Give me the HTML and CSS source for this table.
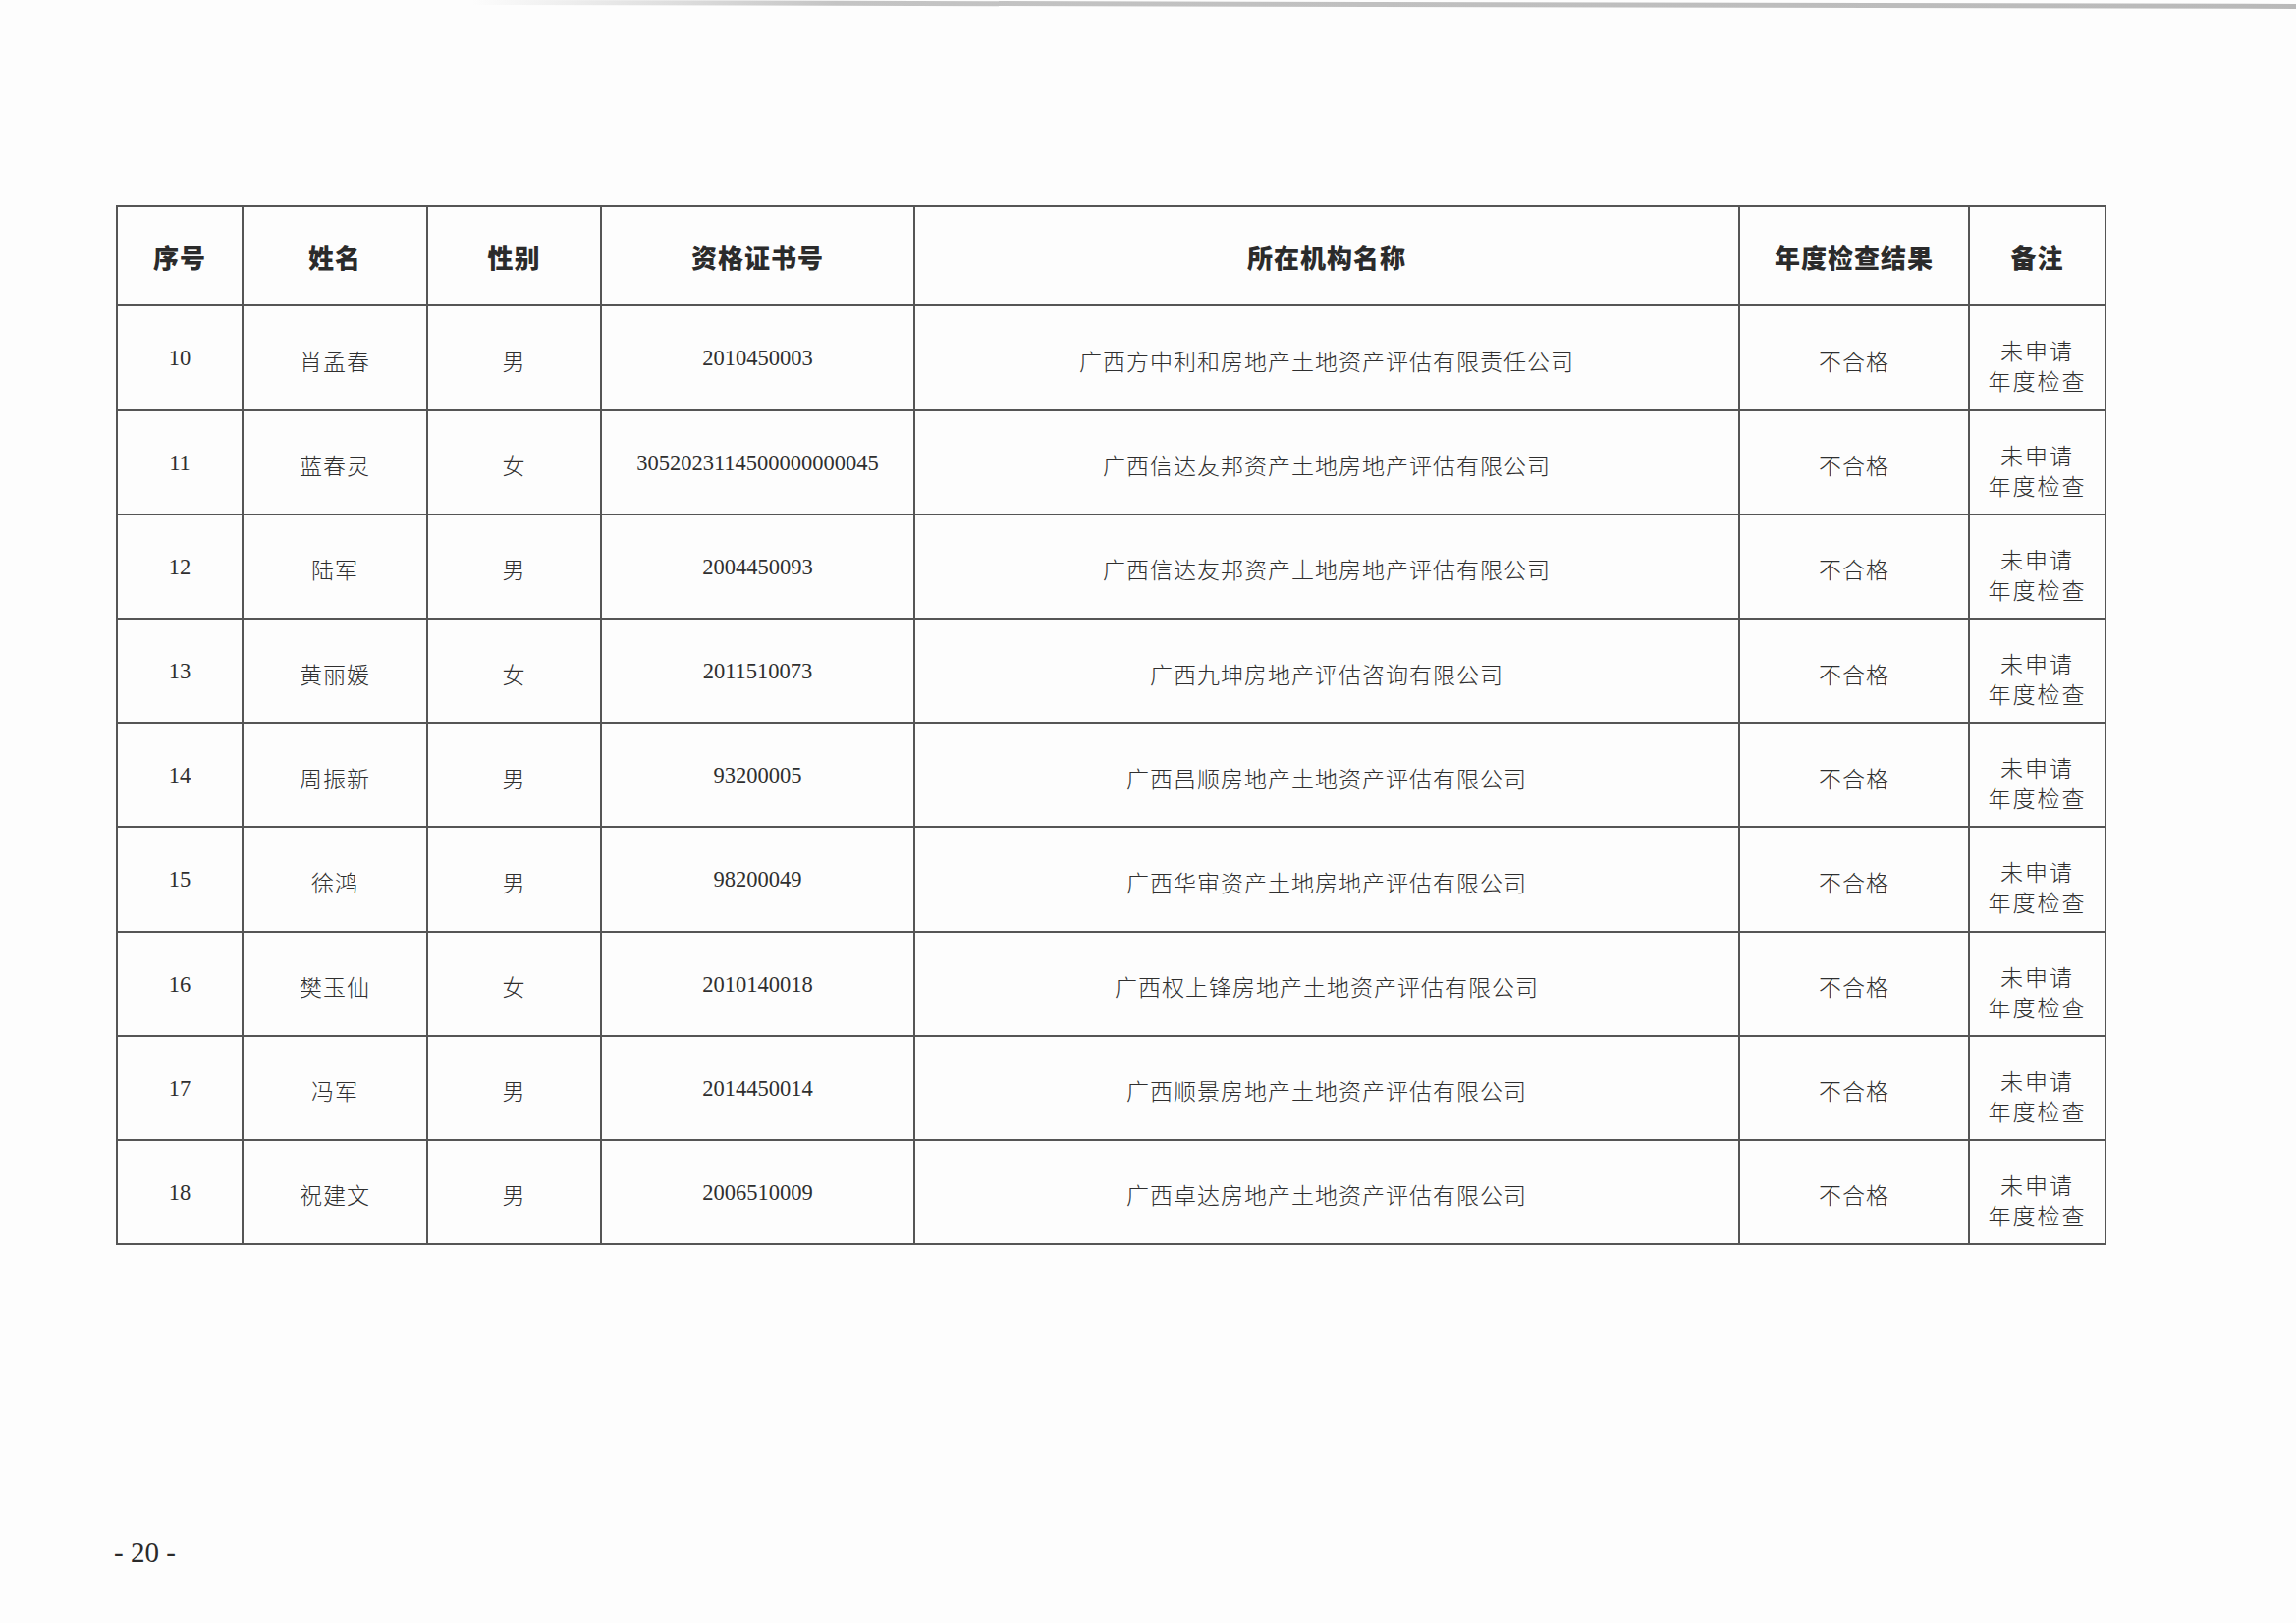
FILE: index.html
```html
<!DOCTYPE html>
<html lang="zh-CN">
<head>
<meta charset="utf-8">
<title>年度检查结果</title>
<link rel="stylesheet" href="styles.css">
</head>
<body>
<div class="page">
  <div class="scan-edge"></div>
  <table class="grid">
    <colgroup>
      <col class="c-no"><col class="c-name"><col class="c-sex"><col class="c-cert"><col class="c-org"><col class="c-res"><col class="c-note">
    </colgroup>
    <thead>
      <tr class="head-row">
        <th>序号</th><th>姓名</th><th>性别</th><th>资格证书号</th><th>所在机构名称</th><th>年度检查结果</th><th>备注</th>
      </tr>
    </thead>
    <tbody>
      <tr><td class="num">10</td><td>肖孟春</td><td>男</td><td class="num">2010450003</td><td>广西方中利和房地产土地资产评估有限责任公司</td><td>不合格</td><td class="note">未申请<br>年度检查</td></tr>
      <tr><td class="num">11</td><td>蓝春灵</td><td>女</td><td class="num">3052023114500000000045</td><td>广西信达友邦资产土地房地产评估有限公司</td><td>不合格</td><td class="note">未申请<br>年度检查</td></tr>
      <tr><td class="num">12</td><td>陆军</td><td>男</td><td class="num">2004450093</td><td>广西信达友邦资产土地房地产评估有限公司</td><td>不合格</td><td class="note">未申请<br>年度检查</td></tr>
      <tr><td class="num">13</td><td>黄丽媛</td><td>女</td><td class="num">2011510073</td><td>广西九坤房地产评估咨询有限公司</td><td>不合格</td><td class="note">未申请<br>年度检查</td></tr>
      <tr><td class="num">14</td><td>周振新</td><td>男</td><td class="num">93200005</td><td>广西昌顺房地产土地资产评估有限公司</td><td>不合格</td><td class="note">未申请<br>年度检查</td></tr>
      <tr><td class="num">15</td><td>徐鸿</td><td>男</td><td class="num">98200049</td><td>广西华审资产土地房地产评估有限公司</td><td>不合格</td><td class="note">未申请<br>年度检查</td></tr>
      <tr><td class="num">16</td><td>樊玉仙</td><td>女</td><td class="num">2010140018</td><td>广西权上锋房地产土地资产评估有限公司</td><td>不合格</td><td class="note">未申请<br>年度检查</td></tr>
      <tr><td class="num">17</td><td>冯军</td><td>男</td><td class="num">2014450014</td><td>广西顺景房地产土地资产评估有限公司</td><td>不合格</td><td class="note">未申请<br>年度检查</td></tr>
      <tr><td class="num">18</td><td>祝建文</td><td>男</td><td class="num">2006510009</td><td>广西卓达房地产土地资产评估有限公司</td><td>不合格</td><td class="note">未申请<br>年度检查</td></tr>
    </tbody>
  </table>
  <div class="page-no">- 20 -</div>
</div>
</body>
</html>
```

FILE: styles.css
```css
html, body {
  margin: 0;
  padding: 0;
  background: #fdfdfd;
}

.page {
  position: relative;
  width: 2338px;
  height: 1653px;
  box-sizing: border-box;
  padding: 209px 0 0 118px;
  overflow: hidden;
}

.scan-edge {
  position: absolute;
  top: 0;
  left: 480px;
  width: 1858px;
  height: 5px;
  background: linear-gradient(to right, rgba(190,190,190,0), #c4c4c4 20%, #b9b9b9 100%);
  transform: rotate(0.12deg);
  transform-origin: left top;
}

.grid {
  border-collapse: collapse;
  table-layout: fixed;
  width: 2025px;
  color: #2e2e2e;
}

.c-no { width: 128px; }
.c-name { width: 188px; }
.c-sex { width: 177px; }
.c-cert { width: 319px; }
.c-org { width: 840px; }
.c-res { width: 234px; }
.c-note { width: 139px; }

.grid th,
.grid td {
  border: 2px solid #555;
  text-align: center;
  vertical-align: middle;
  padding: 0;
}

.head-row th {
  height: 97.4px;
  padding-top: 2px;
  font-family: "Noto Sans CJK SC", sans-serif;
  font-weight: 900;
  font-size: 26px;
  color: #2b2b2b;
  letter-spacing: 1px;
}

.grid tbody td {
  height: 99.2px;
  padding-top: 5px;
  font-family: "Liberation Serif", "Noto Sans CJK SC", serif;
  font-weight: 300;
  font-size: 23px;
  color: #2f2f2f;
  letter-spacing: 1px;
}

.grid tbody td.num {
  height: 102.2px;
  padding-top: 2px;
  font-size: 22.5px;
  letter-spacing: 0;
}

.grid tbody td.note {
  height: 84.2px;
  padding-top: 20px;
  line-height: 31px;
  letter-spacing: 2px;
}

.page-no {
  margin-top: 297px;
  margin-left: -2px;
  font-family: "Liberation Serif", serif;
  font-size: 29px;
  color: #2a2a2a;
}
```
